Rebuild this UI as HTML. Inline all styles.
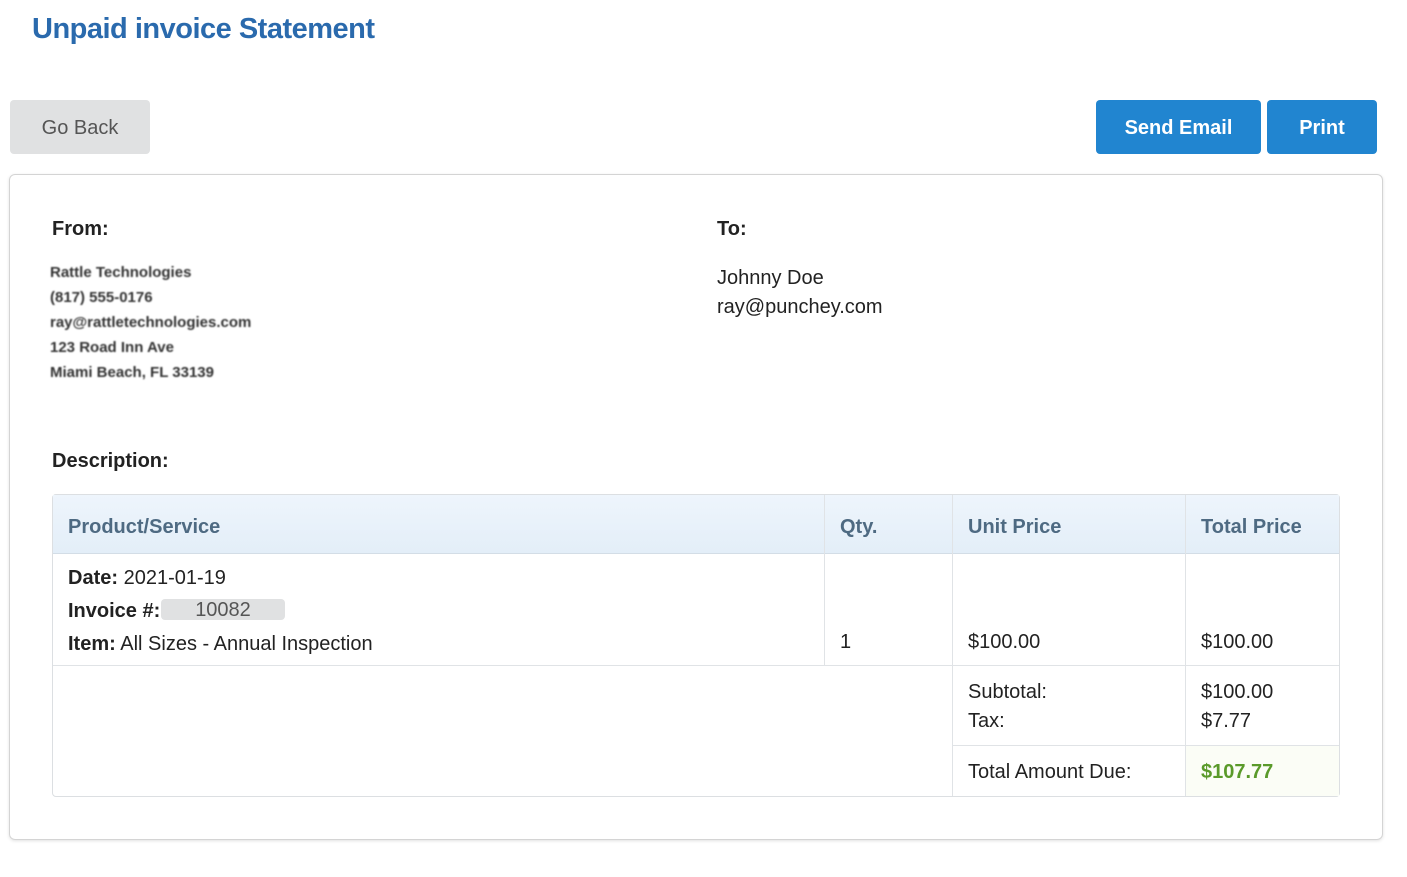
<!DOCTYPE html>
<html><head><meta charset="utf-8"><style>
*{box-sizing:border-box;margin:0;padding:0}
body{width:1407px;height:877px;background:#fff;font-family:"Liberation Sans",sans-serif;color:#222;position:relative;overflow:hidden}
.a{position:absolute;white-space:nowrap}
h1{position:absolute;left:32px;top:13px;font-size:29px;font-weight:bold;color:#2a6aad;letter-spacing:-0.5px}
.btn{position:absolute;top:100px;height:54px;border-radius:4px;font-size:20px;display:flex;align-items:center;justify-content:center;padding-top:2px}
.card{position:absolute;left:9px;top:174px;width:1374px;height:666px;border:1px solid #d4d4d4;border-radius:6px;box-shadow:0 1px 3px rgba(0,0,0,.12)}
.t{font-size:20px}
.b{font-weight:bold}
.hd{color:#4e6a82;font-weight:bold;font-size:20px}
.vl{position:absolute;width:1px;background:#e0e3e6}
.hl{position:absolute;height:1px;background:#e0e3e6}
.px{font-size:15px;font-weight:bold;color:#333;letter-spacing:0px;filter:blur(0.7px)}
</style></head><body>
<h1>Unpaid invoice Statement</h1>
<div class="btn" style="left:10px;width:140px;background:#e0e1e2;color:#555">Go Back</div>
<div class="btn b" style="left:1096px;width:165px;background:#2185d0;color:#fff">Send Email</div>
<div class="btn b" style="left:1267px;width:110px;background:#2185d0;color:#fff">Print</div>
<div class="card"></div>
<div class="a t b" style="left:52px;top:218px">From:</div>
<div class="a px" style="left:50px;top:264px">Rattle Technologies</div>
<div class="a px" style="left:50px;top:289px">(817) 555-0176</div>
<div class="a px" style="left:50px;top:314px">ray@rattletechnologies.com</div>
<div class="a px" style="left:50px;top:339px">123 Road Inn Ave</div>
<div class="a px" style="left:50px;top:364px">Miami Beach, FL 33139</div>
<div class="a t b" style="left:717px;top:218px">To:</div>
<div class="a t" style="left:717px;top:267px">Johnny Doe</div>
<div class="a t" style="left:717px;top:296px">ray@punchey.com</div>
<div class="a t b" style="left:52px;top:450px">Description:</div>
<div class="a" style="left:52px;top:494px;width:1288px;height:303px;border:1px solid #dcdfe2;border-radius:4px"></div>
<div class="a" style="left:53px;top:495px;width:1286px;height:59px;background:linear-gradient(#eef5fc,#e3eef8);border-bottom:1px solid #d3dde6"></div>
<div class="a" style="left:1186px;top:746px;width:153px;height:50px;background:#fbfdf6"></div>
<div class="vl" style="left:824px;top:495px;height:170px"></div>
<div class="vl" style="left:952px;top:495px;height:301px"></div>
<div class="vl" style="left:1185px;top:495px;height:301px"></div>
<div class="hl" style="left:53px;top:665px;width:1286px"></div>
<div class="hl" style="left:953px;top:745px;width:386px"></div>
<div class="a hd" style="left:68px;top:516px">Product/Service</div>
<div class="a hd" style="left:840px;top:516px">Qty.</div>
<div class="a hd" style="left:968px;top:516px">Unit Price</div>
<div class="a hd" style="left:1201px;top:516px">Total Price</div>
<div class="a t" style="left:68px;top:567px"><b>Date:</b> 2021-01-19</div>
<div class="a t" style="left:68px;top:600px"><b>Invoice #:</b></div>
<div class="a t" style="left:161px;top:599px;width:124px;height:21px;background:#e0e1e2;border-radius:4px;text-align:center;color:#555;line-height:23px">10082</div>
<div class="a t" style="left:68px;top:633px"><b>Item:</b> All Sizes - Annual Inspection</div>
<div class="a t" style="left:840px;top:631px">1</div>
<div class="a t" style="left:968px;top:631px">$100.00</div>
<div class="a t" style="left:1201px;top:631px">$100.00</div>
<div class="a t" style="left:968px;top:681px">Subtotal:</div>
<div class="a t" style="left:968px;top:710px">Tax:</div>
<div class="a t" style="left:1201px;top:681px">$100.00</div>
<div class="a t" style="left:1201px;top:710px">$7.77</div>
<div class="a t" style="left:968px;top:761px">Total Amount Due:</div>
<div class="a t b" style="left:1201px;top:761px;color:#5a9a2a">$107.77</div>
</body></html>
